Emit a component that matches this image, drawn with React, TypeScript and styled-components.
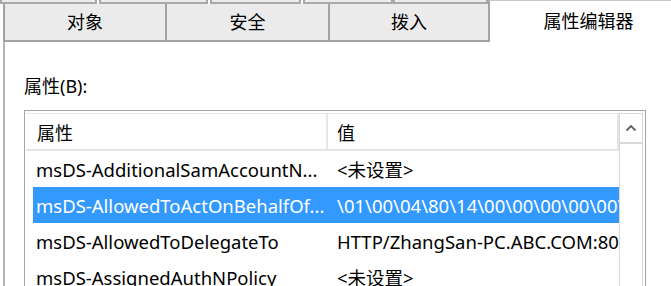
import React from 'react';
import styled, { createGlobalStyle } from 'styled-components';

const Global = createGlobalStyle`
  html, body { margin: 0; padding: 0; background: #fff; }
  body { font-family: "Noto Sans", "Noto Sans CJK SC", sans-serif; color: #000; }
`;

const Page = styled.div`
  width: 671px;
  height: 286px;
  overflow: hidden;
  background: #fff;
  display: flex;
  flex-direction: column;
`;

const TabBar = styled.div`
  display: flex;
  height: 42px;
  flex-shrink: 0;
`;

const BackRows = styled.div`
  width: 488px;
  display: flex;
  flex-direction: column;
`;

const UpperRow = styled.div`
  height: 4px;
  display: flex;
`;

const Sliver = styled.div<{ w: number; gap: number }>`
  width: ${(p) => p.w}px;
  margin-left: ${(p) => p.gap}px;
  background: #ececec;
  border-left: 2px solid #a9a9a9;
  border-right: 2px solid #a9a9a9;
  border-bottom: 2px solid #a9a9a9;
  box-sizing: border-box;
`;

const LowerRow = styled.div`
  flex: 1;
  display: flex;
  padding-left: 3px;
`;

const Tab = styled.div<{ w: number }>`
  width: ${(p) => p.w}px;
  box-sizing: border-box;
  background: #ebebeb;
  border-left: 2px solid #a3a3a3;
  border-bottom: 2px solid #a3a3a3;
  display: flex;
  align-items: center;
  justify-content: center;
  font-size: 18px;
  padding-bottom: 2px;
`;

const ActiveTab = styled.div`
  flex: 1;
  border-left: 2px solid #a3a3a3;
  border-top: 1px solid #c8c8c8;
  background: #fff;
  display: flex;
  justify-content: center;
  align-items: flex-start;
  padding-top: 6px;
  padding-left: 16px;
  font-size: 18px;
  box-sizing: border-box;
`;

const Panel = styled.div`
  flex: 1;
  margin-left: 3px;
  border-left: 2px solid #b4b4b4;
  padding: 32px 0 0 19px;
  display: flex;
  flex-direction: column;
  min-height: 0;
`;

const FieldLabel = styled.div`
  font-size: 18px;
  line-height: 24px;
  height: 24px;
  margin-bottom: 12px;
`;

const ListBox = styled.div`
  width: 622px;
  flex: 1;
  box-sizing: border-box;
  border: 1px solid #a5a5a5;
  border-bottom: none;
  padding: 2px 2px 0 1px;
  display: flex;
  min-height: 0;
`;

const ListBody = styled.div`
  flex: 1;
  display: flex;
  flex-direction: column;
  min-width: 0;
`;

const HeaderRow = styled.div`
  height: 35px;
  display: flex;
  border-top: 1px solid #e6e6e6;
  border-bottom: 2px solid #e6e6e6;
  flex-shrink: 0;
`;

const HeadCell = styled.div<{ w?: number }>`
  ${(p) => (p.w ? `width: ${p.w}px;` : 'flex: 1;')}
  box-sizing: border-box;
  padding-left: ${(p) => (p.w ? 11 : 9)}px;
  display: flex;
  align-items: center;
  font-size: 18px;
  border-right: 2px solid #e6e6e6;
`;

const Rows = styled.div`
  padding-left: 7px;
  display: flex;
  flex-direction: column;
`;

const Row = styled.div<{ selected?: boolean }>`
  height: 36px;
  display: flex;
  align-items: center;
  background: ${(p) => (p.selected ? '#3399ff' : 'transparent')};
  color: ${(p) => (p.selected ? '#fff' : '#000')};
  font-size: 18.5px;
  white-space: nowrap;
  flex-shrink: 0;
`;

const NameCell = styled.div`
  width: 294px;
  padding-left: 3px;
  box-sizing: border-box;
  overflow: hidden;
`;

const ValueCell = styled.div`
  flex: 1;
  padding-left: 10px;
  overflow: hidden;
`;

const ScrollBar = styled.div`
  width: 24px;
  box-sizing: border-box;
  border-left: 1px solid #d9d9d9;
  border-right: 1px solid #d9d9d9;
  display: flex;
  flex-direction: column;
`;

const ScrollButton = styled.div`
  height: 28px;
  border-top: 1px solid #d9d9d9;
  border-bottom: 2px solid #d9d9d9;
  display: flex;
  align-items: center;
  justify-content: center;
`;

const slivers = [
  { w: 97, gap: 0 },
  { w: 110, gap: 2 },
  { w: 91, gap: 2 },
  { w: 91, gap: 2 },
  { w: 95, gap: 0 },
];

const tabs = [
  { label: '对象', w: 162 },
  { label: '安全', w: 163 },
  { label: '拨入', w: 160 },
];

const rows = [
  { name: 'msDS-AdditionalSamAccountN...', value: '<未设置>' },
  { name: 'msDS-AllowedToActOnBehalfOf...', value: '\\01\\00\\04\\80\\14\\00\\00\\00\\00\\00\\00', selected: true },
  { name: 'msDS-AllowedToDelegateTo', value: 'HTTP/ZhangSan-PC.ABC.COM:80' },
  { name: 'msDS-AssignedAuthNPolicy', value: '<未设置>' },
];

export default function App() {
  return (
    <Page>
      <Global />
      <TabBar>
        <BackRows>
          <UpperRow>
            {slivers.map((s, i) => (
              <Sliver key={i} w={s.w} gap={s.gap} />
            ))}
          </UpperRow>
          <LowerRow>
            {tabs.map((t) => (
              <Tab key={t.label} w={t.w}>{t.label}</Tab>
            ))}
          </LowerRow>
        </BackRows>
        <ActiveTab>属性编辑器</ActiveTab>
      </TabBar>
      <Panel>
        <FieldLabel>属性(B):</FieldLabel>
        <ListBox>
          <ListBody>
            <HeaderRow>
              <HeadCell w={302}>属性</HeadCell>
              <HeadCell>值</HeadCell>
            </HeaderRow>
            <Rows>
              {rows.map((r) => (
                <Row key={r.name} selected={r.selected}>
                  <NameCell>{r.name}</NameCell>
                  <ValueCell>{r.value}</ValueCell>
                </Row>
              ))}
            </Rows>
          </ListBody>
          <ScrollBar>
            <ScrollButton>
              <svg width="12" height="8" viewBox="0 0 12 8">
                <path d="M1.5 6.5 L6 2 L10.5 6.5" fill="none" stroke="#606060" strokeWidth="1.8" />
              </svg>
            </ScrollButton>
          </ScrollBar>
        </ListBox>
      </Panel>
    </Page>
  );
}
